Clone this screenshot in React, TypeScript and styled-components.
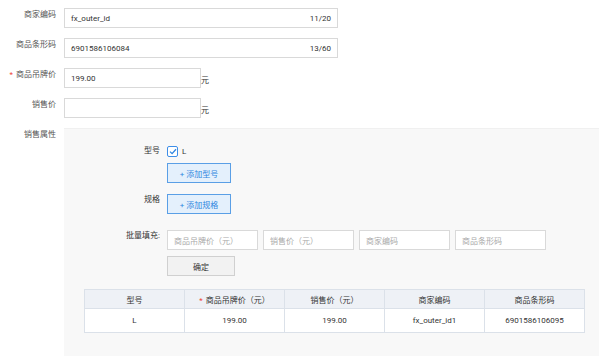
import styled, { createGlobalStyle } from 'styled-components';

const GlobalStyle = createGlobalStyle`
  html, body {
    margin: 0;
    padding: 0;
    background: #fff;
    font-family: Roboto, "Noto Sans CJK SC", sans-serif;
    font-size: 8px;
    color: #333;
  }
  * { box-sizing: border-box; }
`;

const Page = styled.div`
  width: 599px;
  height: 356px;
  overflow: hidden;
  padding-top: 8px;
`;

const FormRow = styled.div<{ $gap?: number }>`
  display: flex;
  align-items: flex-start;
  gap: 8px;
  margin-bottom: ${(p) => (p.$gap ?? 10)}px;
`;

const Label = styled.div<{ $width?: number }>`
  width: ${(p) => p.$width ?? 56}px;
  flex-shrink: 0;
  text-align: right;
  color: #555;
  line-height: 12px;
  padding-top: 1px;
  white-space: nowrap;
`;

const Star = styled.span`
  color: #f04134;
  margin-right: 3px;
`;

const InputBox = styled.div<{ $width: number }>`
  width: ${(p) => p.$width}px;
  height: 20px;
  border: 1px solid #d9d9d9;
  background: #fff;
  display: flex;
  align-items: center;
  justify-content: space-between;
  padding: 0 6px 0 6px;
  color: #333;
`;

const Placeholder = styled.span`
  color: #aaa;
`;

const Counter = styled.span`
  color: #333;
`;

const Unit = styled.span`
  align-self: center;
  margin-left: -8px;
  padding-top: 2px;
  color: #333;
`;

const Panel = styled.div`
  flex: 1;
  min-height: 240px;
  background: #f8f8f8;
  padding: 16px 14px 0 0;
  border-top: 1px solid #f0f0f0;
`;

const SubRow = styled.div<{ $mb: number }>`
  display: flex;
  align-items: flex-start;
  gap: 7px;
  margin-bottom: ${(p) => p.$mb}px;
`;

const SubLabel = styled.div`
  width: 96px;
  flex-shrink: 0;
  text-align: right;
  color: #333;
  line-height: 12px;
  white-space: nowrap;
`;

const Stack = styled.div<{ $gap: number }>`
  display: flex;
  flex-direction: column;
  gap: ${(p) => p.$gap}px;
  align-items: flex-start;
`;

const CheckLine = styled.div`
  display: flex;
  align-items: center;
  gap: 4px;
  height: 12px;
`;

const CheckBox = styled.span`
  width: 11px;
  height: 11px;
  border: 1px solid #3d8ee8;
  border-radius: 2px;
  background: #fff;
  display: inline-flex;
  align-items: center;
  justify-content: center;
`;

const Button = styled.div<{ $primary?: boolean; $width: number }>`
  width: ${(p) => p.$width}px;
  height: 20px;
  display: flex;
  align-items: center;
  justify-content: center;
  border: 1px solid ${(p) => (p.$primary ? '#5a9fe6' : '#d0d0d0')};
  background: ${(p) => (p.$primary ? '#e4f0fc' : '#f2f2f2')};
  color: ${(p) => (p.$primary ? '#2f86e0' : '#333')};
`;

const Inputs = styled.div`
  display: flex;
  gap: 5px;
`;

const Table = styled.table`
  margin-left: 20px;
  width: 501px;
  border-collapse: collapse;
  background: #fff;
  table-layout: fixed;
  text-align: center;

  th, td {
    border: 1px solid #dbe1e9;
    font-weight: normal;
    color: #333;
    padding: 0;
  }
  th {
    height: 19px;
    background: #eef1f6;
  }
  td {
    height: 24px;
  }
`;

const fields = [
  { label: '商家编码', value: 'fx_outer_id', counter: '11/20', width: 274 },
  { label: '商品条形码', value: '6901586106084', counter: '13/60', width: 274 },
];

const batch = ['商品吊牌价（元）', '销售价（元）', '商家编码', '商品条形码'];

const App = () => {
  return (
    <>
      <GlobalStyle />
      <Page>
        {fields.map((f) => (
          <FormRow key={f.label}>
            <Label>{f.label}</Label>
            <InputBox $width={f.width}>
              <span>{f.value}</span>
              <Counter>{f.counter}</Counter>
            </InputBox>
          </FormRow>
        ))}
        <FormRow>
          <Label>
            <Star>*</Star>商品吊牌价
          </Label>
          <InputBox $width={137}>
            <span>199.00</span>
          </InputBox>
          <Unit>元</Unit>
        </FormRow>
        <FormRow>
          <Label>销售价</Label>
          <InputBox $width={137} />
          <Unit>元</Unit>
        </FormRow>
        <FormRow $gap={0}>
          <Label>销售属性</Label>
          <Panel>
            <SubRow $mb={11}>
              <SubLabel>型号</SubLabel>
              <Stack $gap={6}>
                <CheckLine>
                  <CheckBox>
                    <svg width="8" height="7" viewBox="0 0 8 7">
                      <path d="M1 3.6 L3.1 5.6 L7 1.2" fill="none" stroke="#2f86e0" strokeWidth="1.3" />
                    </svg>
                  </CheckBox>
                  <span>L</span>
                </CheckLine>
                <Button $primary $width={64}>+ 添加型号</Button>
              </Stack>
            </SubRow>
            <SubRow $mb={16}>
              <SubLabel>规格</SubLabel>
              <Button $primary $width={64}>+ 添加规格</Button>
            </SubRow>
            <SubRow $mb={13}>
              <SubLabel>批量填充:</SubLabel>
              <Stack $gap={6}>
                <Inputs>
                  {batch.map((b) => (
                    <InputBox key={b} $width={91}>
                      <Placeholder>{b}</Placeholder>
                    </InputBox>
                  ))}
                </Inputs>
                <Button $width={68}>确定</Button>
              </Stack>
            </SubRow>
            <Table>
              <thead>
                <tr>
                  <th>型号</th>
                  <th>
                    <Star>*</Star>商品吊牌价（元）
                  </th>
                  <th>销售价（元）</th>
                  <th>商家编码</th>
                  <th>商品条形码</th>
                </tr>
              </thead>
              <tbody>
                <tr>
                  <td>L</td>
                  <td>199.00</td>
                  <td>199.00</td>
                  <td>fx_outer_id1</td>
                  <td>6901586106095</td>
                </tr>
              </tbody>
            </Table>
          </Panel>
        </FormRow>
      </Page>
    </>
  );
};

export default App;
